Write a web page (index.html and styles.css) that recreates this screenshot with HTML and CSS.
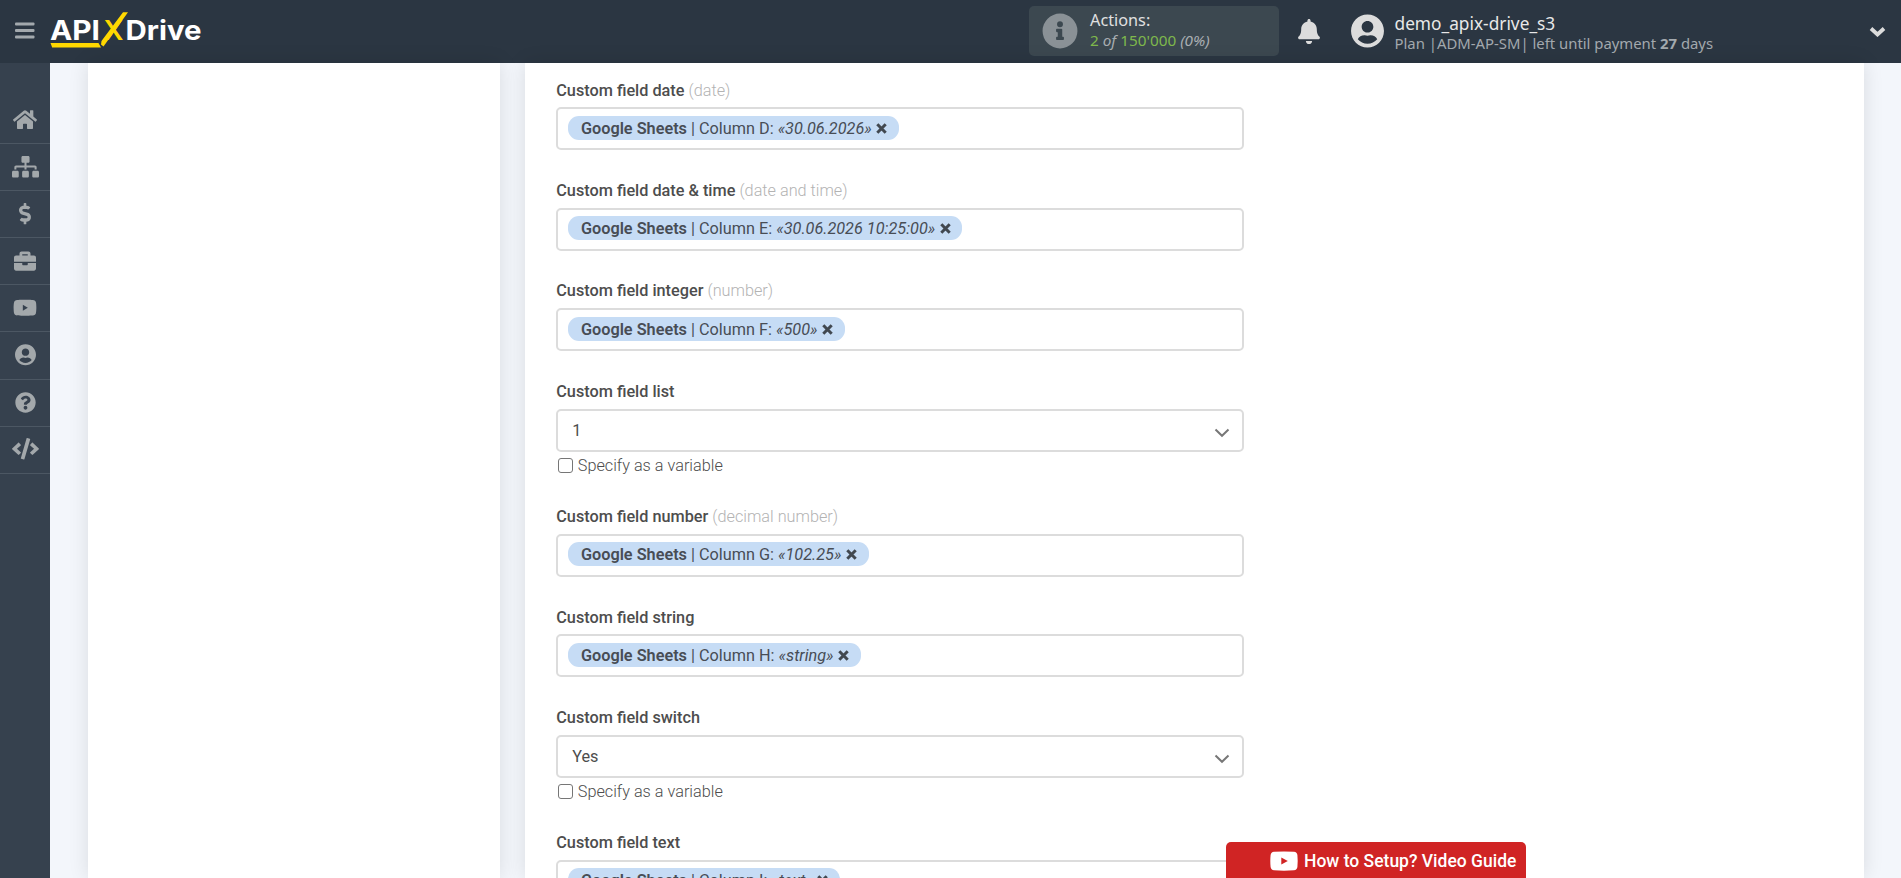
FILE: index.html
```html
<!DOCTYPE html>
<html lang="en">
<head>
<meta charset="utf-8">
<title>ApiX-Drive</title>
<link rel="stylesheet" href="styles.css">
</head>
<body>
<header class="topbar">
  <svg class="burger" viewBox="0 0 20 18"><rect y="0.4" width="19.5" height="3.2" rx="1"/><rect y="6.9" width="19.5" height="3.2" rx="1"/><rect y="13.4" width="19.5" height="3.2" rx="1"/></svg>
  <svg class="logo" viewBox="0 0 156 40">
    <g class="logo-text">
      <text x="0" y="30" textLength="50" lengthAdjust="spacingAndGlyphs">API</text>
      <text class="logo-x" x="53.5" y="30" textLength="20" lengthAdjust="spacingAndGlyphs">X</text>
      <text x="75.500" y="30" textLength="76" lengthAdjust="spacingAndGlyphs">Drive</text>
    </g>
    <path class="logo-mark" d="M.5 33H48.500L51 37.500H2.200zM73 2.200H78L53.500 36.500L51 34.500L51.500 31z"/>
  </svg>
  <div class="actions">
    <svg class="info" viewBox="0 0 512 512"><path d="M256 8a248 248 0 1 0 0 496a248 248 0 1 0 0-496zm0 110a42 42 0 1 1 0 84a42 42 0 1 1 0-84zm56 254c0 6.600-5.400 12-12 12h-88c-6.600 0-12-5.400-12-12v-24c0-6.600 5.400-12 12-12h12v-64h-12c-6.600 0-12-5.400-12-12v-24c0-6.600 5.400-12 12-12h64c6.600 0 12 5.400 12 12v100h12c6.600 0 12 5.400 12 12z"/></svg>
    <div class="actions-text">
      <div class="actions-title">Actions:</div>
      <div class="actions-count"><b>2</b> <i>of</i> <b>150'000</b> <i>(0%)</i></div>
    </div>
  </div>
  <svg class="bell" viewBox="0 0 448 512"><path d="M224 512c35.320 0 63.970-28.650 63.970-64H160.030c0 35.350 28.650 64 63.970 64zm215.390-149.710c-19.320-20.760-55.470-51.990-55.470-154.290 0-77.700-54.480-139.900-127.940-155.160V32c0-17.670-14.320-32-31.980-32s-31.980 14.330-31.980 32v20.840C118.560 68.100 64.080 130.300 64.080 208c0 102.300-36.150 133.530-55.470 154.290-6 6.450-8.660 14.160-8.610 21.710.110 16.400 12.980 32 32.100 32h383.800c19.120 0 32-15.600 32.100-32 .050-7.550-2.610-15.270-8.610-21.710z"/></svg>
  <svg class="avatar" viewBox="0 0 496 512"><path d="M248 8C111 8 0 119 0 256s111 248 248 248 248-111 248-248S385 8 248 8zm0 96c48.600 0 88 39.400 88 88s-39.400 88-88 88-88-39.400-88-88 39.400-88 88-88zm0 344c-58.700 0-111.300-26.600-146.500-68.200 18.800-35.400 55.600-59.800 98.500-59.800 2.400 0 4.800.4 7.100 1.100 13 4.200 26.600 6.900 40.900 6.900 14.300 0 28-2.700 40.900-6.900 2.300-.7 4.700-1.100 7.100-1.100 42.900 0 79.700 24.400 98.500 59.800C359.300 421.400 306.700 448 248 448z"/></svg>
  <div class="user">
    <div class="user-name">demo_apix-drive_s3</div>
    <div class="user-plan">Plan |ADM-AP-SM| left until payment <b>27</b> days</div>
  </div>
  <svg class="chev" viewBox="0 0 17 11"><path d="M2 2.500L8.500 8.500L15 2.500"/></svg>
</header>
<div class="shell">
  <nav class="side">
    <a class="item"><svg style="width:24px" viewBox="0 0 576 512"><path d="M280.400 148.300L96 300.100V464a16 16 0 0 0 16 16l112.100-.3a16 16 0 0 0 15.900-16V368a16 16 0 0 1 16-16h64a16 16 0 0 1 16 16v95.600a16 16 0 0 0 16 16.100L464 480a16 16 0 0 0 16-16V300L295.700 148.300a12.200 12.200 0 0 0-15.300 0zM571.600 251.500L488 182.600V44.100a12 12 0 0 0-12-12h-56a12 12 0 0 0-12 12v72.600L318.500 43a48 48 0 0 0-61 0L4.300 251.500a12 12 0 0 0-1.600 16.900l25.500 31A12 12 0 0 0 45.200 301l235.200-193.700a12.200 12.200 0 0 1 15.300 0L530.900 301a12 12 0 0 0 16.900-1.600l25.500-31a12 12 0 0 0-1.700-16.900z"/></svg></a>
    <a class="item"><svg style="width:27px" viewBox="0 0 640 512"><path d="M128 352H32c-17.700 0-32 14.300-32 32v96c0 17.700 14.300 32 32 32h96c17.700 0 32-14.300 32-32v-96c0-17.700-14.300-32-32-32zm-24-80h192v48h48v-48h192v48h48v-57.600c0-21.200-17.200-38.400-38.400-38.400H344v-64h40c17.700 0 32-14.300 32-32V32c0-17.700-14.300-32-32-32H256c-17.700 0-32 14.300-32 32v96c0 17.700 14.300 32 32 32h40v64H94.400C73.200 224 56 241.200 56 262.400V320h48v-48zm264 80h-96c-17.700 0-32 14.300-32 32v96c0 17.700 14.300 32 32 32h96c17.700 0 32-14.300 32-32v-96c0-17.700-14.300-32-32-32zm240 0h-96c-17.700 0-32 14.300-32 32v96c0 17.700 14.300 32 32 32h96c17.700 0 32-14.300 32-32v-96c0-17.700-14.300-32-32-32z"/></svg></a>
    <a class="item"><svg style="width:12px" viewBox="0 0 288 512"><path d="M209.200 233.400l-108-31.600C88.700 198.200 80 186.500 80 173.500c0-16.300 13.200-29.500 29.500-29.500h66.300c12.200 0 24.200 3.700 34.200 10.500 6.100 4.100 14.300 3.100 19.500-2l34.800-34c7.100-6.900 6.100-18.400-1.800-24.500C238 74.800 207.400 64.100 176 64V16c0-8.800-7.200-16-16-16h-32c-8.800 0-16 7.200-16 16v48h-2.500C45.800 64-5.400 118.700.5 183.600c4.200 46.100 39.400 83.600 83.800 96.600l102.500 30c12.500 3.700 21.200 15.300 21.200 28.300 0 16.300-13.200 29.500-29.500 29.500h-66.300C100 368 88 364.300 78 357.500c-6.100-4.100-14.300-3.100-19.500 2l-34.800 34c-7.100 6.900-6.100 18.400 1.800 24.500 24.500 19.200 55.100 29.900 86.500 30v48c0 8.800 7.200 16 16 16h32c8.800 0 16-7.200 16-16v-48.200c46.600-.9 90.300-28.600 105.700-72.700 21.500-61.600-14.600-124.800-72.500-141.700z"/></svg></a>
    <a class="item"><svg style="width:22px" viewBox="0 0 512 512"><path d="M320 336a16 16 0 0 1-16 16h-96a16 16 0 0 1-16-16v-32H0v128c0 25.600 22.400 48 48 48h416c25.600 0 48-22.400 48-48V304H320zM464 128h-80V80c0-25.600-22.400-48-48-48H176c-25.600 0-48 22.400-48 48v48H48c-25.600 0-48 22.400-48 48v96h512v-96c0-25.600-22.400-48-48-48zm-144 0H192V96h128z"/></svg></a>
    <a class="item"><svg style="width:24px" viewBox="0 0 576 512"><path d="M549.700 124.100c-6.300-23.700-24.800-42.300-48.300-48.600C458.800 64 288 64 288 64S117.200 64 74.600 75.500c-23.500 6.300-42 24.900-48.300 48.600-11.400 42.900-11.400 132.300-11.400 132.300s0 89.400 11.400 132.300c6.300 23.700 24.800 41.500 48.300 47.800C117.200 448 288 448 288 448s170.800 0 213.400-11.500c23.500-6.300 42-24.200 48.300-47.800 11.400-42.900 11.400-132.300 11.400-132.300s0-89.400-11.400-132.300zM236 328V184l120 72z"/></svg></a>
    <a class="item"><svg style="width:21px" viewBox="0 0 496 512"><path d="M248 8C111 8 0 119 0 256s111 248 248 248 248-111 248-248S385 8 248 8zm0 96c48.600 0 88 39.400 88 88s-39.400 88-88 88-88-39.400-88-88 39.400-88 88-88zm0 344c-58.700 0-111.300-26.600-146.500-68.200 18.800-35.400 55.600-59.800 98.500-59.800 2.400 0 4.800.4 7.100 1.100 13 4.200 26.600 6.900 40.900 6.900 14.300 0 28-2.700 40.900-6.900 2.300-.7 4.700-1.100 7.100-1.100 42.900 0 79.700 24.400 98.500 59.800C359.300 421.400 306.700 448 248 448z"/></svg></a>
    <a class="item"><svg style="width:21px" viewBox="0 0 512 512"><path d="M504 256c0 137-111 248-248 248S8 393 8 256C8 119.100 119 8 256 8s248 111.100 248 248zM262.700 90c-54.500 0-89.300 23-116.500 63.800-3.500 5.300-2.400 12.400 2.700 16.300l34.700 26.300c5.200 3.900 12.600 3 16.700-2.100 17.900-22.700 30.100-35.800 57.300-35.800 20.400 0 45.700 13.100 45.700 33 0 15-12.400 22.700-32.500 34C247.100 238.500 216 254.900 216 296v4c0 6.600 5.400 12 12 12h56c6.600 0 12-5.400 12-12v-1.300c0-28.500 83.200-29.600 83.200-106.700 0-58-60.200-102-116.500-102zM256 338c-25.400 0-46 20.600-46 46 0 25.400 20.600 46 46 46s46-20.600 46-46c0-25.400-20.600-46-46-46z"/></svg></a>
    <a class="item"><svg style="width:27px" viewBox="0 0 640 512"><path d="M278.900 511.500l-61-17.700c-6.400-1.800-10-8.500-8.200-14.900L346.200 8.700c1.800-6.400 8.500-10 14.900-8.200l61 17.700c6.400 1.800 10 8.500 8.200 14.900L293.800 503.300c-1.900 6.400-8.500 10.100-14.900 8.200zm-114-112.200l43.500-46.400c4.600-4.900 4.300-12.700-.8-17.200L117 256l90.600-79.700c5.100-4.500 5.500-12.300.8-17.200l-43.500-46.400c-4.500-4.800-12.100-5.100-17-.5L3.800 247.200c-5.100 4.700-5.100 12.800 0 17.500l144.100 135.100c4.900 4.600 12.500 4.400 17-.5zm327.200.6l144.100-135.100c5.100-4.700 5.100-12.800 0-17.500L492.100 112.100c-4.800-4.500-12.400-4.300-17 .5L431.600 159c-4.600 4.900-4.300 12.700.8 17.200L523 256l-90.600 79.700c-5.100 4.500-5.500 12.300-.8 17.200l43.500 46.400c4.500 4.900 12.100 5.100 17 .6z"/></svg></a>
  </nav>
  <main class="main">
    <section class="card card-left"></section>
    <section class="card card-form">
      <div class="field"><div class="label">Custom field date <span>(date)</span></div><div class="box"><div class="tag"><b>Google Sheets</b> | Column D: <i>«30.06.2026»</i><svg class="x" viewBox="0 0 11 11"><path d="M1.300 1.300l8.400 8.400M9.700 1.300l-8.400 8.400"/></svg></div></div></div>
      <div class="field"><div class="label">Custom field date &amp; time <span>(date and time)</span></div><div class="box"><div class="tag"><b>Google Sheets</b> | Column E: <i>«30.06.2026 10:25:00»</i><svg class="x" viewBox="0 0 11 11"><path d="M1.300 1.300l8.400 8.400M9.700 1.300l-8.400 8.400"/></svg></div></div></div>
      <div class="field"><div class="label">Custom field integer <span>(number)</span></div><div class="box"><div class="tag"><b>Google Sheets</b> | Column F: <i>«500»</i><svg class="x" viewBox="0 0 11 11"><path d="M1.300 1.300l8.400 8.400M9.700 1.300l-8.400 8.400"/></svg></div></div></div>
      <div class="field tall"><div class="label">Custom field list</div><div class="box select">1<svg class="arrow" viewBox="0 0 16 10"><path d="M1.500 1.500L8 7.800L14.500 1.500"/></svg></div><label class="check"><span class="cb"></span>Specify as a variable</label></div>
      <div class="field"><div class="label">Custom field number <span>(decimal number)</span></div><div class="box"><div class="tag"><b>Google Sheets</b> | Column G: <i>«102.25»</i><svg class="x" viewBox="0 0 11 11"><path d="M1.300 1.300l8.400 8.400M9.700 1.300l-8.400 8.400"/></svg></div></div></div>
      <div class="field"><div class="label">Custom field string</div><div class="box"><div class="tag"><b>Google Sheets</b> | Column H: <i>«string»</i><svg class="x" viewBox="0 0 11 11"><path d="M1.300 1.300l8.400 8.400M9.700 1.300l-8.400 8.400"/></svg></div></div></div>
      <div class="field tall"><div class="label">Custom field switch</div><div class="box select">Yes<svg class="arrow" viewBox="0 0 16 10"><path d="M1.500 1.500L8 7.800L14.500 1.500"/></svg></div><label class="check"><span class="cb"></span>Specify as a variable</label></div>
      <div class="field"><div class="label">Custom field text</div><div class="box"><div class="tag"><b>Google Sheets</b> | Column I: <i>«text»</i><svg class="x" viewBox="0 0 11 11"><path d="M1.300 1.300l8.400 8.400M9.700 1.300l-8.400 8.400"/></svg></div></div></div>
    </section>
  </main>
</div>
<div class="video"><svg viewBox="0 0 28 20"><path fill-rule="evenodd" d="M4 .8Q14 0 24 .8Q27 1 27.400 4Q28 10 27.400 16Q27 19 24 19.300Q14 20 4 19.300Q1 19 .6 16Q0 10 .6 4Q1 1 4 .8zM11.300 6.400V13.400L17.800 9.900z"/></svg>How to Setup? Video Guide</div>
</body>
</html>
```
FILE: styles.css
```css
* { box-sizing: border-box; }
body {
  margin: 0;
  height: 878px;
  overflow: hidden;
  background: #f3f6fb;
  font-family: Roboto, sans-serif;
  font-size: 16.25px;
  color: #4d4d4d;
}
.topbar {
  display: flex;
  height: 63px;
  background: #2b3642;
  font-family: "Noto Sans", sans-serif;
}
.burger { width: 20px; height: 18px; margin: 21.500px 0 0 15px; fill: #a3a9ad; }
.logo { width: 156px; height: 40px; margin: 10px 0 0 15px; }
.logo-text { font: 700 27px Inter, sans-serif; fill: #fff; }
.logo .logo-x, .logo-mark { fill: #ffd800; }
.logo .logo-x { font-weight: 600; }
.actions {
  display: flex;
  width: 250px;
  height: 50px;
  margin: 6px 0 0 823px;
  padding-left: 13px;
  border-radius: 5px;
  background: #3c4850;
}
.info { width: 36px; height: 36px; margin-top: 7px; fill: #8a9196; }
.actions-text { margin-left: 12px; white-space: nowrap; }
.actions-title { margin-top: 3px; font-size: 16.250px; line-height: 22px; color: #e0e0e0; }
.actions-count { margin-top: -1px; font-size: 15.300px; line-height: 20px; color: #a9aeb2; }
.actions-count b { font-weight: 400; color: #7fb84c; }
.bell { width: 22px; height: 25px; margin: 19px 0 0 19px; fill: #dcdcdc; }
.avatar { width: 33px; height: 34px; margin: 14px 0 0 30.500px; fill: #dcdcdc; }
.user { margin-left: 11px; white-space: nowrap; }
.user-name { margin-top: 12px; font-size: 17.300px; line-height: 23px; color: #e8e8e8; }
.user-plan { margin-top: -1px; font-size: 14.870px; line-height: 18px; color: #a3a9ae; }
.chev { width: 17px; height: 11px; margin: 26px 15px 0 auto; }
.chev path { fill: none; stroke: #dcdcdc; stroke-width: 3.800; }
.shell { display: flex; height: 815px; }
.side { width: 50px; padding-top: 34px; background: #36414e; }
.item {
  display: flex;
  align-items: center;
  justify-content: center;
  height: 47.100px;
  padding-bottom: 1px;
  border-bottom: 1px solid #4c5763;
}
.item svg { fill: #a3a8ab; overflow: visible; }
.main { display: flex; flex: 1; gap: 25px; padding: 0 37px 0 38px; }
.card { background: #fff; box-shadow: 0 0 19px rgba(0, 0, 0, .11); }
.card-left { width: 412px; }
.card-form { flex: 1; height: 815px; padding: 15.600px 0 0 31.250px; overflow: hidden; }
.field { width: 687.500px; height: 100.450px; }
.field.tall { height: 125.200px; }
.label { height: 28.800px; line-height: 24px; font-weight: 500; white-space: pre; }
.label span { font-weight: 300; color: #b3b3b3; }
.box {
  display: flex;
  height: 43px;
  padding: 6.300px 10px;
  border: 2px solid #dcdcdc;
  border-radius: 5px;
}
.tag {
  height: 24px;
  padding: 0 11.500px 0 12.700px;
  border-radius: 11px;
  background: #c6dcf5;
  line-height: 25px;
  white-space: pre;
  color: #484d55;
}
.tag b { font-weight: 600; }
.x { width: 11px; height: 11px; margin-left: 4.600px; }
.x path { fill: none; stroke: #414850; stroke-width: 3; }
.select { justify-content: space-between; padding: 0 12px 0 14px; line-height: 39.500px; }
.arrow { width: 16px; height: 10px; margin-top: 17px; }
.arrow path { fill: none; stroke: #777; stroke-width: 2; }
.check { display: flex; height: 24px; margin-top: 2px; padding-left: 1.500px; line-height: 24px; font-weight: 300; }
.cb { width: 15px; height: 15px; margin: 4px 5px 0 0; border: 1px solid #767676; border-radius: 3px; }
.video {
  position: absolute;
  left: 1226px;
  bottom: 0;
  display: flex;
  align-items: center;
  width: 300px;
  height: 36px;
  padding: 2px 0 0 44px;
  border-radius: 5px 5px 0 0;
  background: #d02424;
  font-size: 17.500px;
  font-weight: 500;
  white-space: nowrap;
  color: #fff;
}
.video svg { width: 28px; height: 20px; margin-right: 6px; fill: #fff; }
```
